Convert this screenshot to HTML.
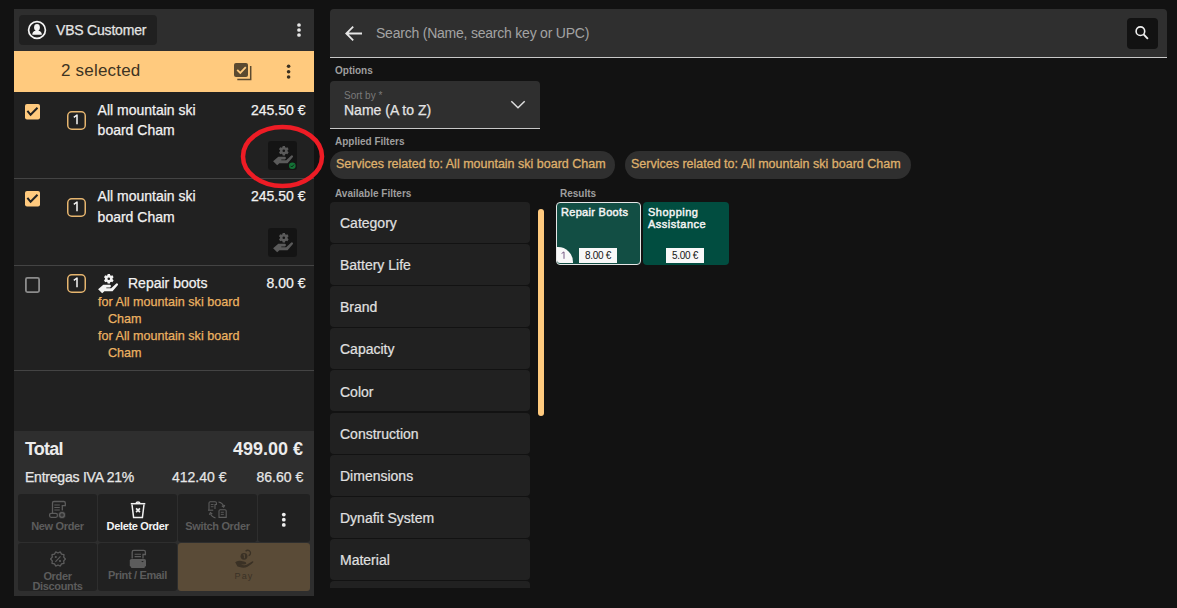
<!DOCTYPE html>
<html><head><meta charset="utf-8">
<style>
*{margin:0;padding:0;box-sizing:border-box}
html,body{width:1177px;height:608px;overflow:hidden;background:#121212;font-family:"Liberation Sans",sans-serif;color:#e6e6e6}
.a{position:absolute}
.t{position:absolute;white-space:nowrap;line-height:1}
.md{-webkit-text-stroke:0.25px currentColor}
.sep{position:absolute;left:14px;width:300px;height:1px;background:#444}
.fi{position:absolute;left:0;width:200px;height:41px;background:#212121;border-radius:4px}
.fi span{position:absolute;left:10px;top:14.2px;font-size:14px;-webkit-text-stroke:0.2px currentColor;line-height:1;color:#e0e0e0;white-space:nowrap}
.btn{position:absolute;background:#212121;border-radius:3px}
.bl{position:absolute;left:0;right:0;text-align:center;font-size:11px;font-weight:bold;line-height:1;white-space:nowrap;color:#5c5c5c;letter-spacing:-0.35px}
.lbl{position:absolute;font-size:10px;font-weight:bold;line-height:1;color:#9e9e9e;white-space:nowrap}
.chip{position:absolute;top:151px;height:28px;border-radius:14px;background:#2f2f2f}
.chip span{position:absolute;left:6px;top:7.2px;font-size:12.5px;letter-spacing:0px;-webkit-text-stroke:0.3px currentColor;line-height:1;color:#dfb06c;white-space:nowrap}
</style></head><body>

<!-- LEFT PANEL -->
<div class="a" style="left:14px;top:9px;width:300px;height:42px;background:#2e2e2e"></div>
<div class="a" style="left:19px;top:15px;width:138px;height:30px;background:#202020;border-radius:4px"></div>
<div class="t md" style="left:56px;top:23px;font-size:14px;letter-spacing:-0.2px;color:#e4e4e4">VBS Customer</div>

<div class="a" style="left:14px;top:51px;width:300px;height:41px;background:#ffca7e"></div>
<div class="t" style="left:61px;top:61.6px;font-size:17px;letter-spacing:0.2px;color:#3d3322">2 selected</div>

<div class="a" style="left:14px;top:92px;width:300px;height:339px;background:#212121"></div>
<div class="sep" style="top:178px"></div>
<div class="sep" style="top:265px"></div>
<div class="sep" style="top:370px"></div>

<!-- row 1 -->
<div class="t md" style="left:97.6px;top:99.75px;font-size:14px;line-height:20.2px;color:#f2f2f2">All mountain ski<br>board Cham</div>
<div class="t md" style="left:251px;top:103.15px;font-size:14px;color:#f2f2f2">245.50 €</div>
<!-- row 2 -->
<div class="t md" style="left:97.6px;top:185.8px;font-size:14px;line-height:20.7px;color:#f2f2f2">All mountain ski<br>board Cham</div>
<div class="t md" style="left:251px;top:189.15px;font-size:14px;color:#f2f2f2">245.50 €</div>
<!-- row 3 -->
<div class="t md" style="left:128px;top:276.35px;font-size:14px;color:#f2f2f2">Repair boots</div>
<div class="t md" style="left:266.5px;top:276.35px;font-size:14px;color:#f2f2f2">8.00 €</div>
<div class="t md" style="left:98px;top:294.2px;font-size:12.6px;line-height:16.8px;color:#ecb262">for All mountain ski board<br><span style="margin-left:10px">Cham</span><br>for All mountain ski board<br><span style="margin-left:10px">Cham</span></div>

<!-- summary -->
<div class="a" style="left:14px;top:431px;width:300px;height:165px;background:#2e2e2e"></div>
<div class="t" style="left:25px;top:439.6px;font-size:18px;font-weight:bold;letter-spacing:-0.8px;color:#ececec">Total</div>
<div class="t" style="left:233px;top:439.6px;font-size:18px;font-weight:bold;color:#ececec">499.00 €</div>
<div class="t md" style="left:25px;top:470.3px;font-size:14px;letter-spacing:-0.22px;color:#e6e6e6">Entregas IVA 21%</div>
<div class="t md" style="left:172px;top:470.3px;font-size:14px;color:#e6e6e6">412.40 €</div>
<div class="t md" style="left:256.5px;top:470.3px;font-size:14px;color:#e6e6e6">86.60 €</div>

<div class="btn" style="left:18px;top:494px;width:79px;height:48px"><div class="bl" style="top:27.3px">New Order</div></div>
<div class="btn" style="left:98px;top:494px;width:79px;height:48px"><div class="bl" style="top:27.3px;color:#f4f4f4">Delete Order</div></div>
<div class="btn" style="left:178px;top:494px;width:79px;height:48px"><div class="bl" style="top:27.3px">Switch Order</div></div>
<div class="btn" style="left:258px;top:494px;width:52px;height:48px"></div>
<div class="btn" style="left:18px;top:543px;width:79px;height:48px;overflow:hidden"><div class="bl" style="top:27.5px;line-height:10px">Order<br>Discounts</div></div>
<div class="btn" style="left:98px;top:543px;width:79px;height:48px"><div class="bl" style="top:27.3px">Print / Email</div></div>
<div class="btn" style="left:178px;top:543px;width:132px;height:48px;background:#5a4b37"><div class="bl" style="top:28.6px;font-size:9px;font-weight:normal;color:#3b3226;letter-spacing:1.1px">Pay</div></div>

<!-- RIGHT AREA -->
<div class="a" style="left:330px;top:9px;width:837px;height:48px;background:#2f2f2f;border-radius:4px 4px 0 0"></div>
<div class="a" style="left:330px;top:57px;width:837px;height:1px;background:#c8c8c8"></div>
<div class="t" style="left:376px;top:26.4px;font-size:14px;letter-spacing:-0.22px;color:#a3a3a3">Search (Name, search key or UPC)</div>
<div class="a" style="left:1127px;top:18px;width:31px;height:31px;background:#121212;border-radius:4px"></div>

<div class="lbl" style="left:335px;top:65.5px">Options</div>
<div class="a" style="left:330px;top:81px;width:210px;height:47px;background:#2f2f2f;border-radius:4px 4px 0 0"></div>
<div class="a" style="left:330px;top:128px;width:210px;height:1px;background:#c8c8c8"></div>
<div class="t" style="left:344px;top:91.3px;font-size:10px;color:#7a7a7a">Sort by *</div>
<div class="t md" style="left:344px;top:103.2px;font-size:14px;color:#e4e4e4">Name (A to Z)</div>

<div class="lbl" style="left:335px;top:136.5px">Applied Filters</div>
<div class="chip" style="left:330px;width:285px"><span>Services related to: All mountain ski board Cham</span></div>
<div class="chip" style="left:625px;width:286px"><span>Services related to: All mountain ski board Cham</span></div>

<div class="lbl" style="left:335px;top:188.8px">Available Filters</div>
<div class="lbl" style="left:560px;top:188.8px">Results</div>

<div class="a" style="left:330px;top:202px;width:200px;height:385.6px;overflow:hidden">
<div class="fi" style="top:0.0px"><span>Category</span></div>
<div class="fi" style="top:42.1px"><span>Battery Life</span></div>
<div class="fi" style="top:84.2px"><span>Brand</span></div>
<div class="fi" style="top:126.3px"><span>Capacity</span></div>
<div class="fi" style="top:168.4px"><span>Color</span></div>
<div class="fi" style="top:210.5px"><span>Construction</span></div>
<div class="fi" style="top:252.6px"><span>Dimensions</span></div>
<div class="fi" style="top:294.7px"><span>Dynafit System</span></div>
<div class="fi" style="top:336.8px"><span>Material</span></div>
<div class="fi" style="top:378.9px"><span></span></div>
</div>
<div class="a" style="left:538px;top:209px;width:6px;height:207px;background:#ffca7e;border-radius:3px"></div>

<!-- cards -->
<div class="a" style="left:556px;top:202px;width:85px;height:63px;background:#124e44;border:1px solid #e6e6e6;border-radius:4px"></div>
<div class="t" style="left:561px;top:206.8px;font-size:11px;-webkit-text-stroke:0.45px currentColor;letter-spacing:0.3px;color:#f4f4f4">Repair Boots</div>
<div class="a" style="left:557px;top:247px;width:16px;height:16px;background:#f8f8f8;border-radius:0 15px 0 3px"></div>

<div class="a" style="left:579px;top:248px;width:38px;height:15px;background:#f8f8f8"></div>
<div class="t" style="left:579px;top:250.5px;width:38px;text-align:center;font-size:10px;letter-spacing:-0.3px;color:#151515">8.00 €</div>

<div class="a" style="left:643px;top:202px;width:86px;height:63px;background:#014d40;border-radius:4px"></div>
<div class="t" style="left:648px;top:206.8px;font-size:11px;-webkit-text-stroke:0.45px currentColor;letter-spacing:0.5px;line-height:11.8px;color:#f4f4f4">Shopping<br>Assistance</div>
<div class="a" style="left:666px;top:248px;width:38px;height:15px;background:#f8f8f8"></div>
<div class="t" style="left:666px;top:250.5px;width:38px;text-align:center;font-size:10px;letter-spacing:-0.3px;color:#151515">5.00 €</div>

<!-- ICONS (SVG overlay) -->
<svg class="a" style="left:0;top:0" width="1177" height="608" viewBox="0 0 1177 608">

<!-- customer icon -->
<circle cx="37" cy="30" r="8.4" fill="none" stroke="#f4f4f4" stroke-width="1.7"/>
<ellipse cx="37" cy="27.4" rx="2.9" ry="3.4" fill="#f4f4f4"/><rect x="35.6" y="29.5" width="2.8" height="2.2" fill="#f4f4f4"/>
<path d="M32.3,34.8 C32.3,31.4 34.6,30.8 37,30.8 C39.4,30.8 41.8,31.4 41.8,34.8 Z" fill="#f4f4f4"/>
<!-- kebabs -->
<g fill="#e6e6e6"><circle cx="299" cy="25" r="1.85"/><circle cx="299" cy="30" r="1.85"/><circle cx="299" cy="35" r="1.85"/></g>
<g fill="#3a3020"><circle cx="288.6" cy="66.3" r="1.8"/><circle cx="288.6" cy="71.7" r="1.8"/><circle cx="288.6" cy="77" r="1.8"/></g>
<!-- multi check icon -->
<rect x="234" y="63" width="14" height="14" rx="2" fill="#5b4a30"/>
<polyline points="237.2,69.8 240.3,72.9 245.8,67.2" fill="none" stroke="#ffca7e" stroke-width="1.8"/>
<path d="M237.3,79.5 H250.7 V66" fill="none" stroke="#5b4a30" stroke-width="1.5"/>
<!-- row checkboxes -->
<rect x="25" y="104" width="15" height="15.5" rx="2" fill="#ffca7e"/>
<polyline points="27.4,110.8 30.6,114.8 37.5,107.7" fill="none" stroke="#222" stroke-width="2"/>
<rect x="25" y="191" width="15" height="15.5" rx="2" fill="#ffca7e"/>
<polyline points="27.4,197.8 30.6,201.8 37.5,194.7" fill="none" stroke="#222" stroke-width="2"/>
<rect x="25.9" y="277.9" width="13.2" height="14.2" rx="1.5" fill="none" stroke="#8c8c8c" stroke-width="1.8"/>
<!-- qty boxes -->
<g fill="none" stroke="#e6b56f" stroke-width="1.5">
<rect x="67.75" y="111.75" width="17.5" height="17.5" rx="4"/>
<rect x="67.75" y="198.75" width="17.5" height="17.5" rx="4"/>
<rect x="67.75" y="274.75" width="17.5" height="17.5" rx="4"/>
</g>
<g fill="none" stroke="#f6f6f6" stroke-width="1.5" stroke-linejoin="round">
<path d="M77,124.2 V115 L73.8,117.3"/>
<path d="M77,211.2 V202 L73.8,204.3"/>
<path d="M77,287.2 V278 L73.8,280.3"/>
</g>
<!-- service icon row3 -->
<g transform="translate(94,270)" fill="#f4f4f4"><path d="M13.63,3.90 L15.97,3.90 L16.16,5.21 L17.19,5.81 L18.43,5.32 L19.59,7.34 L18.55,8.17 L18.55,9.35 L19.59,10.18 L18.43,12.20 L17.19,11.71 L16.16,12.31 L15.97,13.62 L13.63,13.62 L13.44,12.31 L12.41,11.71 L11.17,12.20 L10.01,10.18 L11.05,9.35 L11.05,8.17 L10.01,7.34 L11.17,5.32 L12.41,5.81 L13.44,5.21Z M13.50,8.76 a1.30,1.30 0 1,0 2.60,0 a1.30,1.30 0 1,0 -2.60,0Z" fill-rule="evenodd"/>
<path d="M4.1,19.3 L9.3,14.8 L15.8,14.8 Q16.9,14.8 16.9,16.1 Q16.9,17.4 15.8,17.4 L12.3,17.4 L12.3,18.3 L17.2,18.3 L22.3,13.5 Q23.2,12.9 23.9,13.9 Q24.3,14.6 23.7,15.2 L18.6,21.2 L10.4,21.2 L8.2,23.3 Z"/></g>
<!-- dark icon buttons -->
<rect x="268" y="141" width="29" height="29" rx="3" fill="#141414"/>
<g transform="translate(269,142)" fill="#5a5a5a"><path d="M13.63,3.90 L15.97,3.90 L16.16,5.21 L17.19,5.81 L18.43,5.32 L19.59,7.34 L18.55,8.17 L18.55,9.35 L19.59,10.18 L18.43,12.20 L17.19,11.71 L16.16,12.31 L15.97,13.62 L13.63,13.62 L13.44,12.31 L12.41,11.71 L11.17,12.20 L10.01,10.18 L11.05,9.35 L11.05,8.17 L10.01,7.34 L11.17,5.32 L12.41,5.81 L13.44,5.21Z M13.50,8.76 a1.30,1.30 0 1,0 2.60,0 a1.30,1.30 0 1,0 -2.60,0Z" fill-rule="evenodd"/>
<path d="M4.1,19.3 L9.3,14.8 L15.8,14.8 Q16.9,14.8 16.9,16.1 Q16.9,17.4 15.8,17.4 L12.3,17.4 L12.3,18.3 L17.2,18.3 L22.3,13.5 Q23.2,12.9 23.9,13.9 Q24.3,14.6 23.7,15.2 L18.6,21.2 L10.4,21.2 L8.2,23.3 Z"/></g>
<circle cx="292.3" cy="165.8" r="3.3" fill="#147236"/>
<polyline points="290.6,165.8 291.8,167 294,164.6" fill="none" stroke="#0b2414" stroke-width="1"/>
<rect x="268" y="228" width="29" height="29" rx="3" fill="#141414"/>
<g transform="translate(269,229)" fill="#5a5a5a"><path d="M13.63,3.90 L15.97,3.90 L16.16,5.21 L17.19,5.81 L18.43,5.32 L19.59,7.34 L18.55,8.17 L18.55,9.35 L19.59,10.18 L18.43,12.20 L17.19,11.71 L16.16,12.31 L15.97,13.62 L13.63,13.62 L13.44,12.31 L12.41,11.71 L11.17,12.20 L10.01,10.18 L11.05,9.35 L11.05,8.17 L10.01,7.34 L11.17,5.32 L12.41,5.81 L13.44,5.21Z M13.50,8.76 a1.30,1.30 0 1,0 2.60,0 a1.30,1.30 0 1,0 -2.60,0Z" fill-rule="evenodd"/>
<path d="M4.1,19.3 L9.3,14.8 L15.8,14.8 Q16.9,14.8 16.9,16.1 Q16.9,17.4 15.8,17.4 L12.3,17.4 L12.3,18.3 L17.2,18.3 L22.3,13.5 Q23.2,12.9 23.9,13.9 Q24.3,14.6 23.7,15.2 L18.6,21.2 L10.4,21.2 L8.2,23.3 Z"/></g>
<path d="M564,258.8 V251.9 L561.6,253.5" fill="none" stroke="#6a4a78" stroke-width="0.9" stroke-linejoin="round"/>
<!-- red ellipse -->
<ellipse cx="282.5" cy="156.5" rx="39.5" ry="29.5" fill="none" stroke="#ee1c25" stroke-width="4.5"/>
<!-- bottom button icons -->
<g fill="none" stroke="#5c5c5c" stroke-width="1.3">
<path d="M52.5,513.5 V502.8 Q52.5,501.5 54,501.5 H63.8 Q65.3,501.5 65.3,503 V505.7 H62.3 V510.5"/>
<path d="M54.3,505 H59.8 M54.3,507.5 H59.8 M54.3,510 H59.8" stroke-width="1.1"/>
<rect x="49.6" y="513.3" width="7.8" height="4" rx="1.5"/>
<circle cx="62" cy="515" r="3.8" fill="#5c5c5c" stroke="#212121" stroke-width="0.8"/>
<path d="M62,513.2 V516.8 M60.2,515 H63.8" stroke="#2a2a2a" stroke-width="1.1"/>
</g>
<g fill="none" stroke="#f2f2f2" stroke-width="1.5">
<path d="M130.8,503.7 H145.3"/>
<path d="M136,503.4 Q136.4,502.1 138,502.1 Q139.6,502.1 140,503.4"/>
<path d="M132,504.5 L133.6,517.5 H142.4 L144,504.5"/>
<path d="M136.1,508.3 L139.9,512.1 M139.9,508.3 L136.1,512.1" stroke-width="1.7"/>
</g>
<g fill="none" stroke="#5c5c5c" stroke-width="1.1">
<path d="M209,510 V503 Q209,501.8 210.2,501.8 H215.2 Q216.4,501.8 216.4,503 V504.5 H215 V509"/>
<path d="M210.8,504.5 H213.5 M210.8,506.7 H213.5" stroke-width="0.9"/>
<path d="M208,510.2 H213.2"/>
<path d="M218.5,502 Q222.3,502.5 223.6,506.2" stroke-width="1.2"/>
<path d="M221.8,505.8 L223.7,507.2 L224.8,505" stroke-width="1.1"/>
<path d="M219,517.4 V511 Q219,509.8 220.2,509.8 H225 Q226.2,509.8 226.2,511 V517.4 Z"/>
<path d="M220.8,512.3 H223.8 M220.8,514.4 H223.8" stroke-width="0.9"/>
<path d="M215.5,517.8 Q211.8,517.2 210.5,513.6" stroke-width="1.2"/>
<path d="M212.3,514 L210.4,512.6 L209.3,514.8" stroke-width="1.1"/>
</g>
<path d="M60.29,551.96 L61.53,554.15 L63.99,554.65 L63.71,557.15 L65.40,559.00 L63.71,560.85 L63.99,563.35 L61.53,563.85 L60.29,566.04 L58.00,565.00 L55.71,566.04 L54.47,563.85 L52.01,563.35 L52.29,560.85 L50.60,559.00 L52.29,557.15 L52.01,554.65 L54.47,554.15 L55.71,551.96 L58.00,553.00Z" fill="none" stroke="#5c5c5c" stroke-width="1.3" stroke-linejoin="round"/>
<g fill="#5c5c5c"><circle cx="55.8" cy="557" r="1.1"/><circle cx="60" cy="561" r="1.1"/></g>
<path d="M60.5,556.3 L55.4,561.9" stroke="#5c5c5c" stroke-width="1.1"/>
<g fill="none" stroke="#5c5c5c" stroke-width="1.3">
<path d="M132.2,558.5 V552 Q132.2,550.4 133.8,550.4 H143.8 Q145.4,550.4 145.4,552 V554.5 H143 V558.5"/>
<path d="M134.6,554.3 H141 M134.6,556.6 H141" stroke-width="1.1"/>
</g>
<rect x="129.8" y="559" width="16.2" height="7.8" rx="1.6" fill="#5c5c5c"/>
<rect x="131" y="565" width="13.8" height="3" rx="0.8" fill="#5c5c5c"/>
<path d="M141.2,561 H143.8 L142.5,562.3Z" fill="#222"/>
<circle cx="244" cy="556.3" r="3.4" fill="#3a3125"/>
<path d="M243.2,555 L244.4,554.4 V558.3" fill="none" stroke="#5a4b37" stroke-width="1"/>
<path d="M245.6,551.2 A2.8,2.8 0 1,1 248.6,555.7" fill="none" stroke="#3a3125" stroke-width="1.3"/>
<path d="M235.2,562.3 Q237,560.5 240,560.8 L244,561.5 Q246.5,562 246.3,563.5 Q246,564.6 243.5,564.5 L240.5,564.3 L243.8,565.3 Q245.5,565.5 247,564.6 L252.5,561.3 Q253.6,561.1 253.3,562.2 Q252,564 247.5,566.8 Q245,568.1 241.5,567.6 L237.5,566.6 Z" fill="#3a3125"/>
<!-- top kebab in actions -->
<g fill="#eeeeee"><circle cx="283.8" cy="514.6" r="1.9"/><circle cx="283.8" cy="519.7" r="1.9"/><circle cx="283.8" cy="524.9" r="1.9"/></g>
<!-- back arrow -->
<path d="M362,33.5 H346.5 M353.2,26.6 L346.3,33.5 L353.2,40.4" fill="none" stroke="#e6e6e6" stroke-width="1.8"/>
<!-- magnifier -->
<circle cx="1140.4" cy="31.2" r="4.3" fill="none" stroke="#f0f0f0" stroke-width="1.6"/>
<path d="M1143.6,34.4 L1147.9,38.9" stroke="#f0f0f0" stroke-width="1.9"/>
<!-- chevron -->
<polyline points="511.3,101.3 518,107.8 524.7,101.3" fill="none" stroke="#dedede" stroke-width="1.5"/>
</svg>
</body></html>
